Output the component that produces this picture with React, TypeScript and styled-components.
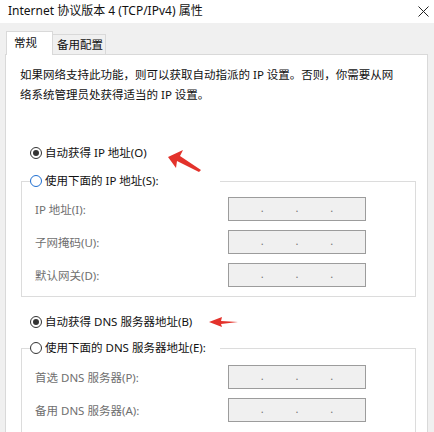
import styled, { createGlobalStyle } from "styled-components";

const GlobalStyle = createGlobalStyle`
  html, body {
    margin: 0;
    padding: 0;
    background: #f0f0f0;
  }
  body {
    font-family: "Noto Sans", "Noto Sans CJK SC", sans-serif;
    font-size: 11.5px;
    color: #1a1a1a;
  }
`;

const cjk = `"Noto Sans", "Noto Sans CJK SC", sans-serif`;

interface Field {
  label: string;
}

const ipFields: Field[] = [
  { label: "IP 地址(I):" },
  { label: "子网掩码(U):" },
  { label: "默认网关(D):" },
];

const dnsFields: Field[] = [
  { label: "首选 DNS 服务器(P):" },
  { label: "备用 DNS 服务器(A):" },
];

export default function App() {
  return (
    <Window>
      <GlobalStyle />
      <TitleBar>
        <Title>Internet 协议版本 4 (TCP/IPv4) 属性</Title>
        <CloseButton>
          <svg width="11" height="11" viewBox="0 0 11 11">
            <path d="M0.5 0.5 L10.5 10.5 M10.5 0.5 L0.5 10.5" stroke="#222" strokeWidth="1" />
          </svg>
        </CloseButton>
      </TitleBar>

      <TabStrip>
        <Tab active>常规</Tab>
        <Tab>备用配置</Tab>
      </TabStrip>

      <Panel>
        <Description>
          如果网络支持此功能，则可以获取自动指派的 IP 设置。否则，你需要从网
          <br />
          络系统管理员处获得适当的 IP 设置。
        </Description>

        <RadioRow top={38}>
          <Radio checked />
          <RadioLabel>自动获得 IP 地址(O)</RadioLabel>
        </RadioRow>

        <Group top={8} bottom={9}>
          <Legend>
            <Radio focused />
            <RadioLabel>使用下面的 IP 地址(S):</RadioLabel>
          </Legend>
          <FieldList first={6}>
            {ipFields.map((f) => (
              <FieldRow key={f.label}>
                <FieldLabel>{f.label}</FieldLabel>
                <IpBox>
                  <Dot>.</Dot>
                  <Dot>.</Dot>
                  <Dot>.</Dot>
                </IpBox>
              </FieldRow>
            ))}
          </FieldList>
        </Group>

        <RadioRow top={15}>
          <Radio checked />
          <RadioLabel>自动获得 DNS 服务器地址(B)</RadioLabel>
        </RadioRow>

        <Group top={6} bottom={20}>
          <Legend>
            <Radio />
            <RadioLabel>使用下面的 DNS 服务器地址(E):</RadioLabel>
          </Legend>
          <FieldList first={7}>
            {dnsFields.map((f) => (
              <FieldRow key={f.label}>
                <FieldLabel>{f.label}</FieldLabel>
                <IpBox>
                  <Dot>.</Dot>
                  <Dot>.</Dot>
                  <Dot>.</Dot>
                </IpBox>
              </FieldRow>
            ))}
          </FieldList>
        </Group>
      </Panel>

      <Arrow width="40" height="26" viewBox="0 0 40 26" style={{ left: 164, top: 148 }}>
        <polygon points="4,9 19,2 16,8 37,22 35,24 13,13 12,20" fill="#e3322b" />
      </Arrow>
      <Arrow width="34" height="12" viewBox="0 0 34 12" style={{ left: 206, top: 316 }}>
        <polygon points="3,6 16,1 15,5 32,6 15,8 16,11" fill="#e3322b" />
      </Arrow>
    </Window>
  );
}

const Window = styled.div`
  position: relative;
  width: 434px;
  height: 432px;
  overflow: hidden;
  background: #f0f0f0;
`;

const TitleBar = styled.div`
  height: 23px;
  background: #fff;
  display: flex;
  align-items: center;
  justify-content: space-between;
  padding: 0 5px 4px 8px;
  box-sizing: border-box;
`;

const Title = styled.div`
  font-family: ${cjk};
  font-size: 12px;
  color: #111;
  white-space: nowrap;
`;

const CloseButton = styled.div`
  display: flex;
  align-items: center;
  padding-top: 4px;
`;

const TabStrip = styled.div`
  display: flex;
  align-items: flex-end;
  padding: 9px 0 0 6px;
  height: 32px;
  box-sizing: border-box;
  position: relative;
  z-index: 1;
`;

const Tab = styled.div<{ active?: boolean }>`
  box-sizing: border-box;
  height: ${(p) => (p.active ? 24 : 21)}px;
  padding: ${(p) => (p.active ? "2px 0 0 7px" : "1px 0 0 4px")};
  width: ${(p) => (p.active ? 47 : 53)}px;
  background: ${(p) => (p.active ? "#fff" : "#f0f0f0")};
  border: 1px solid #d9d9d9;
  border-bottom: ${(p) => (p.active ? "none" : "1px solid #d9d9d9")};
  border-left: ${(p) => (p.active ? "1px solid #d9d9d9" : "none")};
  font-size: 11.5px;
  line-height: 18px;
  color: #111;
  white-space: nowrap;
`;

const Panel = styled.div`
  margin: -1px 6px 0 5px;
  background: #fff;
  border: 1px solid #d9d9d9;
  padding: 10px 11px 0 14px;
  height: 400px;
  box-sizing: border-box;
`;

const Description = styled.div`
  line-height: 20px;
  white-space: nowrap;
  color: #111;
`;

const RadioRow = styled.div<{ top: number }>`
  display: flex;
  align-items: center;
  height: 20px;
  margin-top: ${(p) => p.top}px;
  padding-left: 10px;
`;

const Radio = styled.span<{ checked?: boolean; focused?: boolean }>`
  width: 12px;
  height: 12px;
  box-sizing: border-box;
  border-radius: 50%;
  border: 1px solid ${(p) => (p.focused ? "#1f6fd1" : "#333")};
  display: inline-flex;
  align-items: center;
  justify-content: center;
  flex-shrink: 0;
  background: #fff;
  &::after {
    content: "";
    display: ${(p) => (p.checked ? "block" : "none")};
    width: 6px;
    height: 6px;
    border-radius: 50%;
    background: #333;
  }
`;

const RadioLabel = styled.span`
  margin-left: 3px;
  line-height: 20px;
  white-space: nowrap;
  color: #111;
`;

const Group = styled.fieldset<{ top: number; bottom: number }>`
  margin: ${(p) => p.top}px 0 0 1px;
  padding: 0 0 ${(p) => p.bottom}px 0;
  border: 1px solid #dcdcdc;
  min-width: 0;
`;

const Legend = styled.legend`
  display: flex;
  align-items: center;
  height: 20px;
  margin-left: 8px;
  padding: 0;
  width: 190px;
  background: #fff;
`;

const FieldList = styled.div<{ first: number }>`
  display: flex;
  flex-direction: column;
  gap: 9px;
  padding: ${(p) => p.first}px 0 0 13px;
`;

const FieldRow = styled.div`
  display: grid;
  grid-template-columns: 193px 138px;
  align-items: center;
  height: 24px;
`;

const FieldLabel = styled.span`
  color: #6f6f6f;
  white-space: nowrap;
`;

const IpBox = styled.div`
  height: 24px;
  box-sizing: border-box;
  background: #f0f0f0;
  border: 1px solid #9c9c9c;
  display: flex;
  align-items: center;
  justify-content: space-evenly;
  padding-bottom: 4px;
`;

const Dot = styled.span`
  color: #777;
  font-size: 11px;
`;

const Arrow = styled.svg`
  position: absolute;
  pointer-events: none;
`;
